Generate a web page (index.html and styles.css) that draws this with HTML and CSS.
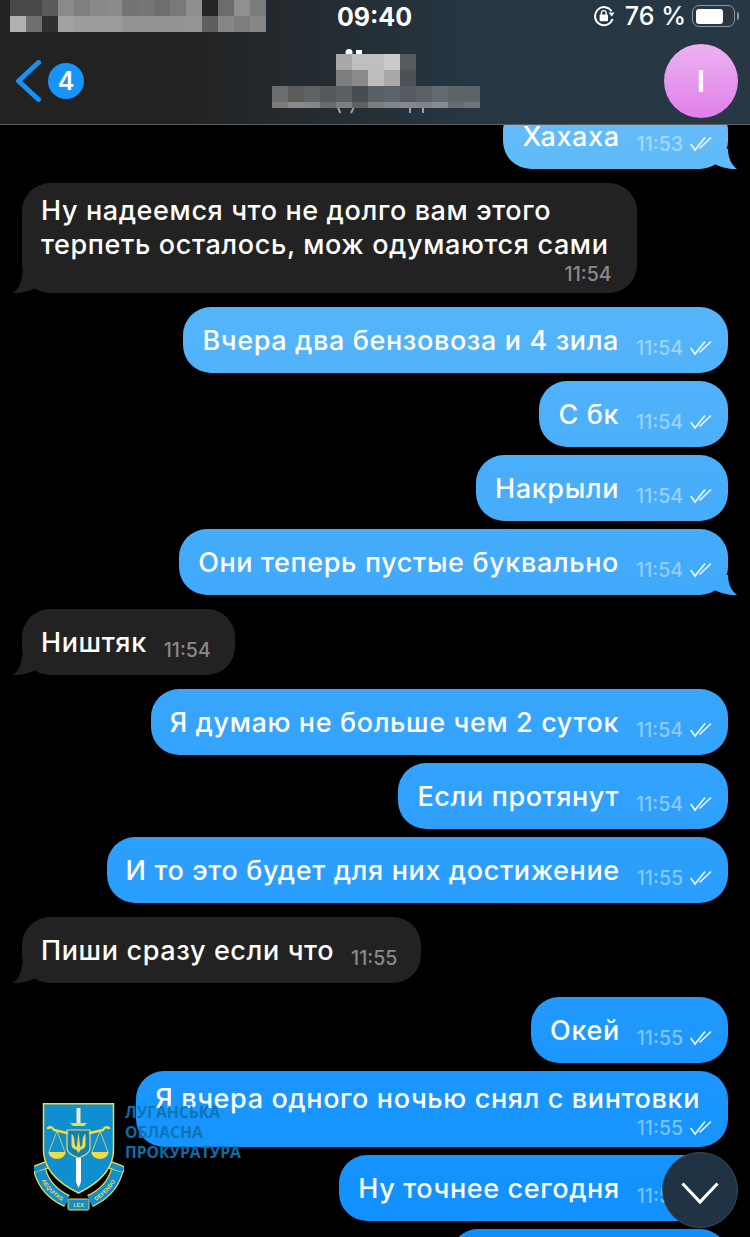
FILE: index.html
```html
<!DOCTYPE html>
<html lang="ru">
<head>
    <meta charset="UTF-8">
    <meta name="viewport" content="width=device-width, initial-scale=1.0">
    <title>Чат</title>
    <link rel="stylesheet" href="styles.css">
</head>
<body>
    <div class="phone">
        <header class="top">
            <div class="status-bar">
                <svg class="status-blur" width="256" height="32" viewBox="0 0 256 32">
                    <rect x="0" width="32" height="16" fill="#484848"/><rect x="32" width="16" height="16" fill="#5a5a5a"/>
                    <rect x="48" width="16" height="16" fill="#8a8a8a"/><rect x="64" width="16" height="16" fill="#7f7f7f"/>
                    <rect x="80" width="16" height="16" fill="#888"/><rect x="96" width="16" height="16" fill="#8b8b8b"/>
                    <rect x="112" width="16" height="16" fill="#737373"/><rect x="128" width="16" height="16" fill="#767676"/>
                    <rect x="144" width="16" height="16" fill="#6e6e6e"/><rect x="160" width="16" height="16" fill="#797979"/>
                    <rect x="176" width="16" height="16" fill="#8f8f8f"/><rect x="192" width="16" height="16" fill="#252525"/>
                    <rect x="208" width="16" height="16" fill="#6c6c6c"/><rect x="224" width="16" height="16" fill="#8f9090"/>
                    <rect x="240" width="16" height="16" fill="#7a7c7c"/>
                    <rect x="0" y="16" width="16" height="16" fill="#b0b0b0"/><rect x="16" y="16" width="16" height="16" fill="#6f6f6f"/>
                    <rect x="32" y="16" width="16" height="16" fill="#303030"/><rect x="48" y="16" width="16" height="16" fill="#a2a2a2"/>
                    <rect x="64" y="16" width="48" height="16" fill="#9c9c9c"/><rect x="112" y="16" width="64" height="16" fill="#949494"/>
                    <rect x="176" y="16" width="16" height="16" fill="#949696"/><rect x="192" y="16" width="16" height="16" fill="#5e6060"/>
                    <rect x="208" y="16" width="16" height="16" fill="#858786"/><rect x="224" y="16" width="16" height="16" fill="#7d7d7d"/>
                    <rect x="240" y="16" width="16" height="16" fill="#868686"/>
                </svg>
                <div class="clock">09:40</div>
                <div class="status-right">
                    <svg class="rotation" width="22" height="22" viewBox="0 0 22 22">
                        <path d="M18.6 6.2A9 9 0 1 0 19.6 14" fill="none" stroke="#fff" stroke-width="2"/>
                        <path d="M15.6 7.4h6l-3 4z" fill="#fff"/>
                        <rect x="6.6" y="9.6" width="8.4" height="6.6" rx="1" fill="#fff"/>
                        <path d="M8.4 10V8a2.4 2.4 0 0 1 4.8 0v2" fill="none" stroke="#fff" stroke-width="1.4"/>
                    </svg>
                    <span class="percent">76 %</span>
                    <div class="battery"><div class="battery-level"></div></div>
                    <div class="battery-nub"></div>
                </div>
            </div>
            <nav class="nav">
                <div class="back">
                    <svg class="back-arrow" width="26" height="42" viewBox="0 0 26 42">
                        <path d="M23.5 2.500 3.500 21l20 18.500" fill="none" stroke="#1492f5" stroke-width="5" stroke-linecap="round" stroke-linejoin="round"/>
                    </svg>
                    <span class="badge">4</span>
                </div>
                <svg class="title-blur" width="208" height="66" viewBox="0 0 208 66">
                    <circle cx="77" cy="4.500" r="3.500" fill="#fff"/><rect x="84" y="2" width="6" height="5" fill="#fff"/>
                    <path d="M66 60l2.500 5M79 65l2.500-5M138 60v5M151 60v5" stroke="#9aa2a6" stroke-width="2" fill="none"/>
                    <rect x="64" y="6" width="16" height="16" fill="#a9a9a9"/><rect x="80" y="6" width="32" height="16" fill="#bfbfbf"/>
                    <rect x="112" y="6" width="16" height="16" fill="#cacaca"/><rect x="128" y="6" width="16" height="16" fill="#58595c"/>
                    <rect x="64" y="22" width="16" height="16" fill="#7e7e7e"/><rect x="80" y="22" width="16" height="16" fill="#8a8a8a"/>
                    <rect x="96" y="22" width="16" height="16" fill="#bdbdbd"/><rect x="112" y="22" width="16" height="16" fill="#a8a8a8"/>
                    <rect x="128" y="22" width="16" height="16" fill="#4e5058"/>
                    <rect x="0" y="38" width="16" height="16" fill="#6c6c6c"/><rect x="16" y="38" width="16" height="16" fill="#5c5c5c"/>
                    <rect x="32" y="38" width="16" height="16" fill="#606465"/><rect x="48" y="38" width="16" height="16" fill="#56595b"/>
                    <rect x="64" y="38" width="16" height="16" fill="#5d6063"/><rect x="80" y="38" width="16" height="16" fill="#474c50"/>
                    <rect x="96" y="38" width="16" height="16" fill="#5b6065"/><rect x="112" y="38" width="16" height="16" fill="#5d6366"/>
                    <rect x="128" y="38" width="16" height="16" fill="#565b63"/><rect x="144" y="38" width="16" height="16" fill="#5a6267"/>
                    <rect x="160" y="38" width="16" height="16" fill="#626c70"/><rect x="176" y="38" width="16" height="16" fill="#5d6568"/>
                    <rect x="192" y="38" width="16" height="16" fill="#5c6468"/>
                    <rect x="0" y="54" width="16" height="6" fill="#7c7c7c"/><rect x="16" y="54" width="16" height="6" fill="#8a8a8a"/>
                    <rect x="32" y="54" width="16" height="6" fill="#858585"/><rect x="48" y="54" width="16" height="6" fill="#6b6b6b"/>
                    <rect x="64" y="54" width="16" height="6" fill="#7f7f7f"/><rect x="80" y="54" width="16" height="6" fill="#5e6265"/>
                    <rect x="96" y="54" width="16" height="6" fill="#787d80"/><rect x="112" y="54" width="16" height="6" fill="#808588"/>
                    <rect x="128" y="54" width="16" height="6" fill="#85888b"/><rect x="144" y="54" width="16" height="6" fill="#7f8488"/>
                    <rect x="160" y="54" width="16" height="6" fill="#858c8f"/><rect x="176" y="54" width="16" height="6" fill="#676d70"/>
                    <rect x="192" y="54" width="16" height="6" fill="#6f7578"/>
                </svg>
                <div class="avatar">I</div>
            </nav>
        </header>

        <main class="chat">
            <div class="chat-list">
                <div class="msg out tail gap"><span class="text">Хахаха</span><span class="meta">11:53 <svg class="ticks" width="22" height="16" viewBox="0 0 22 16"><path d="M.7 8l4.300 6L15 1.500M9.500 12.500 21 1.500" fill="none" stroke="#fff" stroke-width="1.700"/></svg></span></div>

                <div class="msg in tail wide gap"><span class="text">Ну надеемся что не долго вам этого<br>терпеть осталось, мож одумаются сами</span><span class="meta">11:54</span></div>

                <div class="msg out"><span class="text">Вчера два бензовоза и 4 зила</span><span class="meta">11:54 <svg class="ticks" width="22" height="16" viewBox="0 0 22 16"><path d="M.7 8l4.300 6L15 1.500M9.500 12.500 21 1.500" fill="none" stroke="#fff" stroke-width="1.700"/></svg></span></div>
                <div class="msg out"><span class="text">С бк</span><span class="meta">11:54 <svg class="ticks" width="22" height="16" viewBox="0 0 22 16"><path d="M.7 8l4.300 6L15 1.500M9.500 12.500 21 1.500" fill="none" stroke="#fff" stroke-width="1.700"/></svg></span></div>
                <div class="msg out"><span class="text">Накрыли</span><span class="meta">11:54 <svg class="ticks" width="22" height="16" viewBox="0 0 22 16"><path d="M.7 8l4.300 6L15 1.500M9.500 12.500 21 1.500" fill="none" stroke="#fff" stroke-width="1.700"/></svg></span></div>
                <div class="msg out tail gap"><span class="text">Они теперь пустые буквально</span><span class="meta">11:54 <svg class="ticks" width="22" height="16" viewBox="0 0 22 16"><path d="M.7 8l4.300 6L15 1.500M9.500 12.500 21 1.500" fill="none" stroke="#fff" stroke-width="1.700"/></svg></span></div>

                <div class="msg in tail gap"><span class="text">Ништяк</span><span class="meta">11:54</span></div>

                <div class="msg out"><span class="text">Я думаю не больше чем 2 суток</span><span class="meta">11:54 <svg class="ticks" width="22" height="16" viewBox="0 0 22 16"><path d="M.7 8l4.300 6L15 1.500M9.500 12.500 21 1.500" fill="none" stroke="#fff" stroke-width="1.700"/></svg></span></div>
                <div class="msg out"><span class="text">Если протянут</span><span class="meta">11:54 <svg class="ticks" width="22" height="16" viewBox="0 0 22 16"><path d="M.7 8l4.300 6L15 1.500M9.500 12.500 21 1.500" fill="none" stroke="#fff" stroke-width="1.700"/></svg></span></div>
                <div class="msg out gap"><span class="text">И то это будет для них достижение</span><span class="meta">11:55 <svg class="ticks" width="22" height="16" viewBox="0 0 22 16"><path d="M.7 8l4.300 6L15 1.500M9.500 12.500 21 1.500" fill="none" stroke="#fff" stroke-width="1.700"/></svg></span></div>

                <div class="msg in tail gap"><span class="text">Пиши сразу если что</span><span class="meta">11:55</span></div>

                <div class="msg out"><span class="text">Окей</span><span class="meta">11:55 <svg class="ticks" width="22" height="16" viewBox="0 0 22 16"><path d="M.7 8l4.300 6L15 1.500M9.500 12.500 21 1.500" fill="none" stroke="#fff" stroke-width="1.700"/></svg></span></div>
                <div class="msg out wide"><span class="text">Я вчера одного ночью снял с винтовки</span><span class="meta">11:55 <svg class="ticks" width="22" height="16" viewBox="0 0 22 16"><path d="M.7 8l4.300 6L15 1.500M9.500 12.500 21 1.500" fill="none" stroke="#fff" stroke-width="1.700"/></svg></span></div>
                <div class="msg out"><span class="text">Ну точнее сегодня</span><span class="meta">11:55 <svg class="ticks" width="22" height="16" viewBox="0 0 22 16"><path d="M.7 8l4.300 6L15 1.500M9.500 12.500 21 1.500" fill="none" stroke="#fff" stroke-width="1.700"/></svg></span></div>
                <div class="msg out cut"></div>
            </div>
        </main>

        <div class="watermark">
            <svg class="emblem" width="90" height="108" viewBox="0 0 90 108">
                <!-- ribbon under the shield -->
                <path d="M2 66 15 61M87 66 74 61" fill="none" stroke="#f2dc45" stroke-width="8" stroke-linecap="round"/>
                <path d="M2 66 15 61M87 66 74 61" fill="none" stroke="#0f8ed0" stroke-width="5.500" stroke-linecap="round"/>
                <path d="M6 68C10 82 20 92 33 98M83 68C79 82 69 92 56 98" fill="none" stroke="#f2dc45" stroke-width="13"/>
                <path d="M6 68C10 82 20 92 33 98M83 68C79 82 69 92 56 98" fill="none" stroke="#0f8ed0" stroke-width="10.500"/>
                <path id="ribbon-left" d="M7 71C11 83 21 93 34 99" fill="none"/>
                <path id="ribbon-right" d="M55 99C68 93 78 83 82 71" fill="none"/>
                <text class="emblem-text" dominant-baseline="central"><textPath href="#ribbon-left" startOffset="50%" text-anchor="middle">AEQUITAS</textPath></text>
                <text class="emblem-text" dominant-baseline="central"><textPath href="#ribbon-right" startOffset="50%" text-anchor="middle">DEFENDO</textPath></text>
                <rect x="34" y="96" width="21" height="11" rx="1.500" fill="#0f8ed0" stroke="#f2dc45" stroke-width="1"/>
                <text class="emblem-text" x="44.500" y="104" text-anchor="middle">LEX</text>
                <!-- shield -->
                <path d="M9.500.7h70v46c0 20-16 34-35 43.300C25.500 80.700 9.500 66.700 9.500 46.700z" fill="#0f8ed0" stroke="#f2dc45" stroke-width="1.500"/>
                <path d="M42.500 5h4v15h-4z" fill="#e9eccf"/>
                <path d="M36 20h17l-3 3H39z" fill="#f2dc45"/>
                <path d="M42 55h5v24l-2.500 6-2.500-6z" fill="#fff"/>
                <path d="M33 27h23v18c0 5-6 8-11.500 10C39 53 33 50 33 45z" fill="#0f7fbd" stroke="#f2dc45" stroke-width="1.200"/>
                <path d="M37.500 31v11c0 3 3 4 5 5l2 3 2-3c2-1 5-2 5-5V31c-2 1-3 4-3 8 0 3-1 5-2 5-1-3-1-9-2-14-1 5-1 11-2 14-1 0-2-2-2-5 0-4-1-7-3-8z" fill="#f2dc45"/>
                <path d="M14 25c3-2 5 0 6 2l13 3M75 25c-3-2-5 0-6 2l-13 3" fill="none" stroke="#f2dc45" stroke-width="2.400" stroke-linecap="round"/>
                <path d="M23 28 15 49M23 28l8 21M66 28l-8 21M66 28l8 21" fill="none" stroke="#f2dc45" stroke-width=".8"/>
                <path d="M14.500 49h17c0 4-4 7-8.500 7s-8.500-3-8.500-7zM57.500 49h17c0 4-4 7-8.500 7s-8.500-3-8.500-7z" fill="#f2dc45"/>
            </svg>
            <div class="watermark-text">ЛУГАНСЬКА<br>ОБЛАСНА<br>ПРОКУРАТУРА</div>
        </div>

        <button class="scroll-down">
            <svg width="38" height="22" viewBox="0 0 38 22">
                <path d="M1.500 1.500 19 20 36.500 1.500" fill="none" stroke="#fff" stroke-width="3.200"/>
            </svg>
        </button>
    </div>
</body>
</html>
```

FILE: styles.css
```css
html, body {
    margin: 0;
    padding: 0;
    background: #000;
}
body {
    font-family: Inter, "Liberation Sans", sans-serif;
    color: white;
}
.phone {
    position: relative;
    width: 750px;
    height: 1237px;
    overflow: hidden;
    display: flex;
    flex-direction: column;
}

/* header */
.top {
    height: 124px;
    flex-shrink: 0;
    display: flex;
    flex-direction: column;
    background: linear-gradient(90deg, #222222 25%, #263642 62%, #273744 100%);
    border-bottom: 1px solid #5a5f63;
}
.status-bar {
    height: 38px;
    display: grid;
    grid-template-columns: 1fr auto 1fr;
    align-items: start;
    padding-left: 10px;
    padding-right: 11px;
}
.clock {
    font-size: 25px;
    font-weight: 700;
    line-height: 34px;
}
.status-right {
    display: flex;
    align-items: center;
    justify-content: flex-end;
    height: 32px;
}
.rotation {
    margin-right: 10px;
}
.percent {
    font-size: 25px;
    font-weight: 500;
    margin-right: 6px;
}
.battery {
    box-sizing: border-box;
    width: 43px;
    height: 22px;
    padding: 2.500px;
    border: 1.500px solid #8b97a0;
    border-radius: 7px;
}
.battery-level {
    width: 27px;
    height: 100%;
    background: white;
    border-radius: 3px;
}
.battery-nub {
    width: 2px;
    height: 8px;
    margin-left: 2px;
    background: #8b97a0;
    border-radius: 0 2px 2px 0;
}
.nav {
    flex: 1;
    display: grid;
    grid-template-columns: 1fr auto 1fr;
    align-items: center;
    padding: 0 12px 0 14px;
}
.back {
    display: flex;
    align-items: center;
    gap: 7px;
}
.back-arrow {
    margin-left: 1px;
}
.badge {
    width: 36px;
    height: 36px;
    border-radius: 50%;
    background: #1893f6;
    font-size: 25px;
    font-weight: 600;
    line-height: 36px;
    text-align: center;
}
.avatar {
    justify-self: end;
    width: 74px;
    height: 74px;
    border-radius: 50%;
    background: linear-gradient(#ecb2f1, #e17fea);
    font-size: 30px;
    font-weight: 600;
    line-height: 74px;
    text-align: center;
}

/* messages */
.chat {
    flex: 1;
    overflow: hidden;
}
.chat-list {
    margin-top: -22px;
    padding: 0 22px;
    display: flex;
    flex-direction: column;
    align-items: flex-start;
    gap: 8px;
}
.msg {
    position: relative;
    box-sizing: border-box;
    min-height: 66px;
    display: flex;
    align-items: center;
    padding: 16px 24px 14px 19px;
    border-radius: 28px;
}
.msg.gap {
    margin-bottom: 6px;
}
.msg.out {
    align-self: flex-end;
    padding-right: 16px;
    background: linear-gradient(#63bcf8 125px, #0f90ff 1237px) fixed;
}
.msg.in {
    background: #222222;
}
.msg.wide {
    flex-direction: column;
    align-items: flex-start;
    padding-top: 11px;
    padding-right: 28px;
    padding-bottom: 8px;
}
.text {
    font-size: 27px;
    font-weight: 500;
    line-height: 34px;
    letter-spacing: 0.620px;
    white-space: nowrap;
}
.meta {
    display: flex;
    align-items: center;
    gap: 7px;
    margin-left: 17px;
    margin-top: 14px;
    font-size: 19.500px;
    font-weight: 500;
    line-height: 22px;
    white-space: nowrap;
    color: rgba(255, 255, 255, 0.45);
}
.msg.in .meta {
    color: #8a8a8a;
}
.msg.wide .meta {
    align-self: flex-end;
    margin-top: 1px;
}
.msg.out.wide .meta {
    margin-right: -12px;
}
.msg.in.wide .meta {
    margin-right: -3px;
}
.ticks {
    opacity: 0.9;
}
.msg.cut {
    width: 278px;
}
.msg.tail::after {
    content: "";
    position: absolute;
    bottom: 0;
    width: 26px;
    height: 20px;
}
.msg.out.tail::after {
    right: -9px;
    background: inherit;
    clip-path: path("M17 0C17 8 20 16 26 20C19 20.500 8 18 2 14L0 0Z");
}
.msg.in.tail::after {
    left: -9px;
    background: #222222;
    clip-path: path("M9 0C9 8 6 16 0 20C7 20.500 18 18 24 14L26 0Z");
}

/* overlays */
.watermark {
    position: absolute;
    left: 34px;
    top: 1103px;
    display: flex;
    gap: 1px;
    pointer-events: none;
}
.emblem-text {
    font-family: "Liberation Sans", sans-serif;
    font-size: 5.500px;
    font-weight: 700;
    fill: #f2dc45;
}
.watermark-text {
    margin-top: -1px;
    font-family: "Open Sans", sans-serif;
    font-size: 15.700px;
    font-weight: 700;
    line-height: 20px;
    color: #0c74b2;
    opacity: 0.95;
}
.scroll-down {
    position: absolute;
    left: 662px;
    top: 1152px;
    box-sizing: border-box;
    width: 76px;
    height: 76px;
    padding: 8px 0 0;
    border: 1px solid #3b4c5a;
    border-radius: 50%;
    background: #1f3344;
}
```
